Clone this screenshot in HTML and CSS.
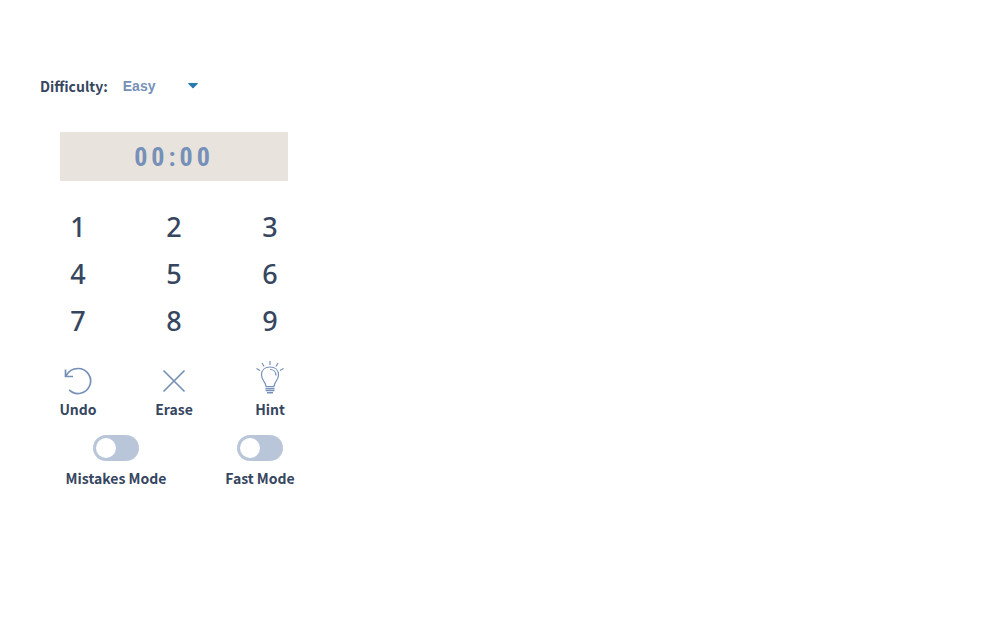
FILE: index.html
```
<!DOCTYPE html>
<html lang="en">
<head>
<meta charset="utf-8">
<meta name="viewport" content="width=device-width, initial-scale=1">
<title>Sudoku</title>
<link rel="stylesheet" href="styles.css">
</head>
<body>
<main class="game">
  <div class="difficulty">
    <label for="level">Difficulty:</label>
    <span class="select-wrap">
      <select id="level" class="select">
        <option>Easy</option>
        <option>Medium</option>
        <option>Hard</option>
      </select>
      <svg class="arrow" width="10" height="6" viewBox="0 0 10 6" aria-hidden="true"><path d="M0 .5Q0 0 .7 0H9.3Q10 0 10 .5L5.6 5Q5 5.5 4.4 5Z" fill="#2878b0"/></svg>
    </span>
  </div>
  <section class="panel">
    <div class="timer">00:00</div>
    <div class="pad">
      <button type="button">1</button>
      <button type="button">2</button>
      <button type="button">3</button>
      <button type="button">4</button>
      <button type="button">5</button>
      <button type="button">6</button>
      <button type="button">7</button>
      <button type="button">8</button>
      <button type="button">9</button>
    </div>
    <div class="actions">
      <button type="button">
        <svg width="36" height="36" viewBox="0 0 36 36" aria-hidden="true"><path d="M5.500 8.500V15.500H13M5.800 15.200C8.500 10 12.800 7.500 18 7.500A12.500 12.500 0 1 1 9.200 28.800"/></svg>
        <span>Undo</span>
      </button>
      <button type="button">
        <svg width="36" height="36" viewBox="0 0 36 36" aria-hidden="true"><path d="M7.500 9.500L28.500 30.500M28.500 9.500L7.500 30.500"/></svg>
        <span>Erase</span>
      </button>
      <button type="button">
        <svg class="bulb" width="36" height="36" viewBox="0 0 36 36" aria-hidden="true"><path d="M18 0V4M10 2L12 5.500M26 2L24 5.500M4.500 7.500L8 9.500M31.500 7.500L28 9.500M14 25.500C14 21 9.500 19.500 9.500 14C9.500 9 13 6 18 6S26.500 9 26.500 14C26.500 19.500 22 21 22 25.500ZM18 8.500C21.500 8.500 24 11 24 14.500"/><path d="M13.500 27.500H22.500M13.500 29.500H22.500M15 31.800H21" stroke-width="1.600"/></svg>
        <span>Hint</span>
      </button>
    </div>
    <div class="modes">
      <label><input type="checkbox" role="switch"><span>Mistakes Mode</span></label>
      <label><input type="checkbox" role="switch"><span>Fast Mode</span></label>
    </div>
  </section>
</main>
</body>
</html>
```
FILE: styles.css
```
* { box-sizing: border-box; }
body {
  margin: 0;
  background: #fff;
  color: #36465f;
  font: 700 14px/20px "Noto Sans CJK SC", "Noto Sans", sans-serif;
}
button {
  border: 0;
  padding: 0;
  background: none;
  color: inherit;
  font: inherit;
  cursor: pointer;
}
.game { padding: 76px 30px 40px; }
.difficulty {
  display: flex;
  align-items: center;
  gap: 15px;
  padding-left: 10px;
}
.difficulty label { line-height: 18px; }
.select-wrap {
  display: grid;
  grid-template-columns: 75px;
  align-items: center;
}
.select-wrap > * { grid-area: 1 / 1; }
.select {
  appearance: none;
  border: 0;
  padding: 0;
  background: none;
  color: #7690b8;
  font: bold 14px/20px "Liberation Sans", sans-serif;
}
.arrow {
  justify-self: end;
  pointer-events: none;
}
.panel { max-width: 288px; }
.timer {
  margin: 36px 30px 23px;
  padding: 9px 0 8px;
  background: #e8e4dd;
  color: #7690b8;
  font: bold 26px/32px "Roboto Condensed", Roboto, sans-serif;
  letter-spacing: 4px;
  text-align: center;
}
.pad, .actions {
  display: grid;
  grid-template-columns: repeat(3, 1fr);
}
.pad { row-gap: 1px; }
.pad button { font: 500 27px/46px "Noto Sans", sans-serif; }
.actions { margin-top: 17px; }
.actions button {
  display: flex;
  flex-direction: column;
  align-items: center;
}
.actions svg {
  margin-bottom: 2px;
  fill: none;
  stroke: #7690b8;
  stroke-width: 1.7;
}
.actions .bulb { stroke-width: 1.2; }
.modes {
  display: grid;
  grid-template-columns: repeat(2, 144px);
  margin: 16px 0 0 14px;
}
.modes label {
  display: flex;
  flex-direction: column;
  align-items: center;
  gap: 7px;
}
.modes input {
  appearance: none;
  display: flex;
  align-items: center;
  width: 46px;
  height: 26px;
  margin: 0;
  padding: 3px;
  border-radius: 13px;
  background: #b9c6da;
}
.modes input::before {
  content: "";
  width: 20px;
  height: 20px;
  border-radius: 50%;
  background: #fff;
}
.modes input:checked { justify-content: flex-end; }
```
